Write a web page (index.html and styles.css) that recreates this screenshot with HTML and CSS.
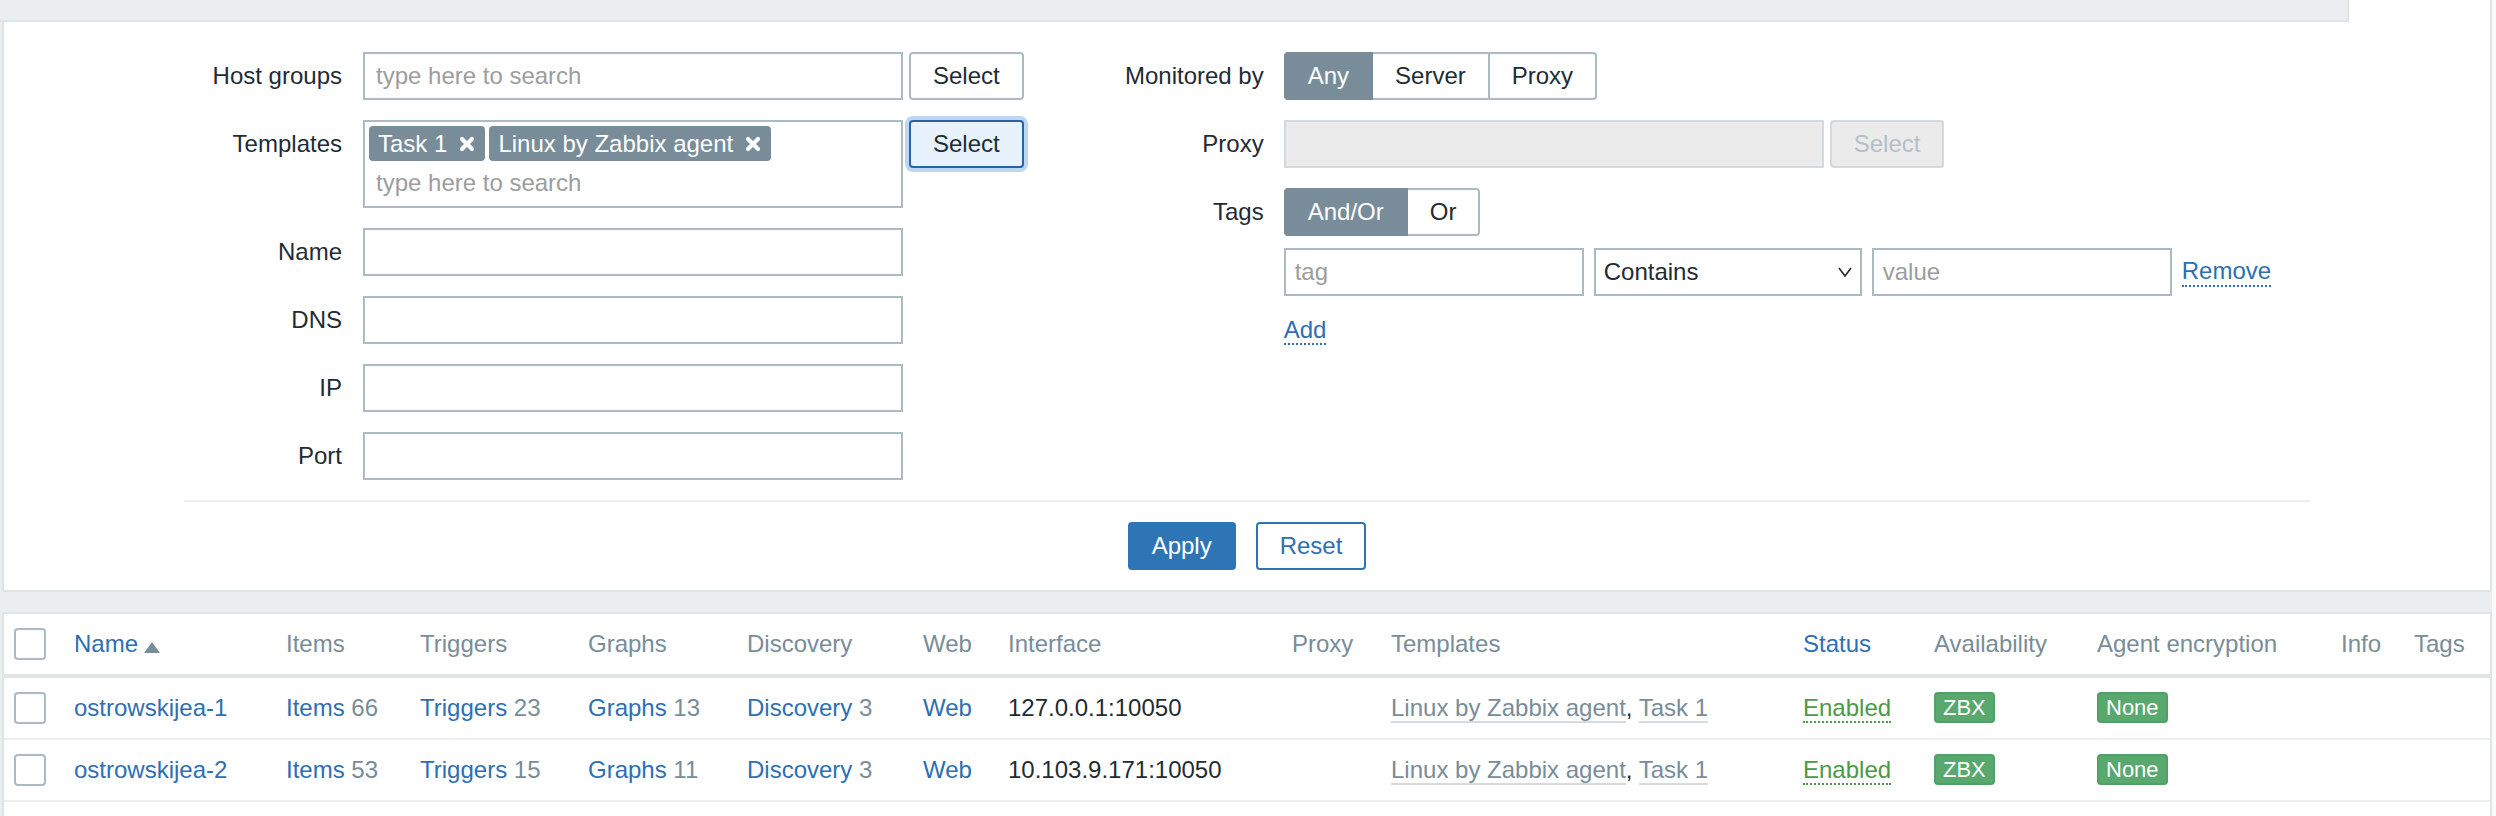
FILE: index.html
```html
<!DOCTYPE html>
<html>
<head>
<meta charset="utf-8">
<link rel="stylesheet" href="styles.css">
</head>
<body>
<div class="page">
  <div class="filter-tabs">
    <div class="tabs-strip"></div>
    <div class="tab-active"></div>
  </div>
  <div class="filter-body">
    <div class="filter-forms">
      <div class="form form-left">
        <label class="lbl">Host groups</label>
        <div class="field">
          <div class="input"><span class="ph">type here to search</span></div>
          <button class="btn-grey">Select</button>
        </div>

        <label class="lbl">Templates</label>
        <div class="field">
          <div class="multiselect">
            <ul class="chips">
              <li class="chip">Task 1<svg class="chip-x" viewBox="0 0 16 16" width="16" height="16"><path d="M3 3L13 13M13 3L3 13" stroke="#fff" stroke-width="4.2" stroke-linecap="round"/></svg></li>
              <li class="chip">Linux by Zabbix agent<svg class="chip-x" viewBox="0 0 16 16" width="16" height="16"><path d="M3 3L13 13M13 3L3 13" stroke="#fff" stroke-width="4.2" stroke-linecap="round"/></svg></li>
            </ul>
            <div class="ms-search"><span class="ph">type here to search</span></div>
          </div>
          <button class="btn-grey btn-focus">Select</button>
        </div>

        <label class="lbl">Name</label>
        <div class="field"><div class="input"></div></div>

        <label class="lbl">DNS</label>
        <div class="field"><div class="input"></div></div>

        <label class="lbl">IP</label>
        <div class="field"><div class="input"></div></div>

        <label class="lbl">Port</label>
        <div class="field"><div class="input"></div></div>
      </div>

      <div class="form form-right">
        <label class="lbl">Monitored by</label>
        <div class="field">
          <div class="radio">
            <span class="radio-item on">Any</span>
            <span class="radio-item">Server</span>
            <span class="radio-item">Proxy</span>
          </div>
        </div>

        <label class="lbl">Proxy</label>
        <div class="field">
          <div class="input disabled"></div>
          <button class="btn-grey btn-disabled">Select</button>
        </div>

        <label class="lbl">Tags</label>
        <div class="field field-col">
          <div class="radio">
            <span class="radio-item on">And/Or</span>
            <span class="radio-item">Or</span>
          </div>
          <div class="tag-row">
            <div class="input input-tag"><span class="ph">tag</span></div>
            <div class="select">Contains<svg class="chev" viewBox="0 0 14 10" width="14" height="10"><polyline points="1,1 7,9 13,1" fill="none" stroke="#1f2c33" stroke-width="1.6"/></svg></div>
            <div class="input input-tag"><span class="ph">value</span></div>
            <a class="link-dotted remove">Remove</a>
          </div>
          <div class="add-row"><a class="link-dotted">Add</a></div>
        </div>
      </div>
    </div>

    <div class="filter-buttons">
      <button class="btn-apply">Apply</button>
      <button class="btn-reset">Reset</button>
    </div>
  </div>

  <div class="list">
    <table class="hosts">
      <colgroup>
        <col class="c-cb"><col class="c-name"><col class="c-items"><col class="c-trig"><col class="c-graph"><col class="c-disc"><col class="c-web"><col class="c-iface"><col class="c-proxy"><col class="c-tpl"><col class="c-status"><col class="c-avail"><col class="c-enc"><col class="c-info"><col class="c-tags">
      </colgroup>
      <thead>
        <tr>
          <th><span class="cb"></span></th>
          <th><a class="link">Name</a><span class="arrow-up"></span></th>
          <th>Items</th>
          <th>Triggers</th>
          <th>Graphs</th>
          <th>Discovery</th>
          <th>Web</th>
          <th>Interface</th>
          <th>Proxy</th>
          <th>Templates</th>
          <th><a class="link">Status</a></th>
          <th>Availability</th>
          <th>Agent encryption</th>
          <th>Info</th>
          <th>Tags</th>
        </tr>
      </thead>
      <tbody>
        <tr>
          <td><span class="cb"></span></td>
          <td><a class="link">ostrowskijea-1</a></td>
          <td><a class="link">Items</a><span class="cnt"> 66</span></td>
          <td><a class="link">Triggers</a><span class="cnt"> 23</span></td>
          <td><a class="link">Graphs</a><span class="cnt"> 13</span></td>
          <td><a class="link">Discovery</a><span class="cnt"> 3</span></td>
          <td><a class="link">Web</a></td>
          <td>127.0.0.1:10050</td>
          <td></td>
          <td class="tpls"><a class="tpl">Linux by Zabbix agent</a>, <a class="tpl">Task 1</a></td>
          <td><a class="enabled">Enabled</a></td>
          <td><span class="badge">ZBX</span></td>
          <td><span class="badge">None</span></td>
          <td></td>
          <td></td>
        </tr>
        <tr>
          <td><span class="cb"></span></td>
          <td><a class="link">ostrowskijea-2</a></td>
          <td><a class="link">Items</a><span class="cnt"> 53</span></td>
          <td><a class="link">Triggers</a><span class="cnt"> 15</span></td>
          <td><a class="link">Graphs</a><span class="cnt"> 11</span></td>
          <td><a class="link">Discovery</a><span class="cnt"> 3</span></td>
          <td><a class="link">Web</a></td>
          <td>10.103.9.171:10050</td>
          <td></td>
          <td class="tpls"><a class="tpl">Linux by Zabbix agent</a>, <a class="tpl">Task 1</a></td>
          <td><a class="enabled">Enabled</a></td>
          <td><span class="badge">ZBX</span></td>
          <td><span class="badge">None</span></td>
          <td></td>
          <td></td>
        </tr>
        <tr class="row-empty">
          <td></td><td></td><td></td><td></td><td></td><td></td><td></td><td></td><td></td><td></td><td></td><td></td><td></td><td></td><td></td>
        </tr>
      </tbody>
    </table>
  </div>
</div>
</body>
</html>
```
FILE: styles.css
```css
* { box-sizing: border-box; }
html, body { margin: 0; padding: 0; background: #fafafa; }
body {
  font-family: "Liberation Sans", Arial, sans-serif;
  font-size: 24px;
  color: #1f2c33;
}
.page {
  width: 2492px;
  min-height: 816px;
  background: #ebeef0;
  padding-left: 2px;
}

/* top tab strip */
.filter-tabs { display: flex; height: 22px; margin-left: -2px; }
.tabs-strip { flex: 1; border-right: 2px solid #dfe4e7; border-bottom: 2px solid #dfe4e7; }
.tab-active { width: 143px; background: #fff; border-right: 2px solid #dfe4e7; }

/* filter panel */
.filter-body {
  background: #fff;
  border: 2px solid #dfe4e7;
  border-top: 0;
  padding: 30px 0 20px;
}
.filter-forms { display: flex; align-items: flex-start; }
.form { display: grid; row-gap: 20px; align-items: start; }
.form-left { grid-template-columns: 338px auto; column-gap: 21px; }
.form-right { grid-template-columns: 240px auto; column-gap: 20px; }
.lbl { text-align: right; line-height: 48px; white-space: nowrap; }
.field { display: flex; align-items: flex-start; gap: 6px; }
.field-col { flex-direction: column; gap: 0; }

.input {
  width: 540px;
  height: 48px;
  border: 2px solid #acbbc2;
  background: #fff;
  padding: 0 11px;
  line-height: 44px;
}
.input.disabled { background: #ebebeb; border-color: #d3d9dc; }
.ph { color: #9d9d9d; }

.multiselect {
  width: 540px;
  height: 88px;
  border: 2px solid #acbbc2;
  background: #fff;
  padding: 4px 4px 1px;
}
.chips { list-style: none; margin: 0; padding: 0; display: flex; gap: 4px; }
.chip {
  height: 35px;
  display: flex;
  align-items: center;
  background: #788d99;
  color: #fff;
  border-radius: 4px;
  padding: 0 10px 0 9px;
  gap: 12px;
  white-space: nowrap;
}
.chip-x { display: block; }
.ms-search { height: 44px; line-height: 44px; padding-left: 7px; }

.btn-grey {
  font: inherit;
  height: 48px;
  padding: 0 22px;
  border: 2px solid #acbbc2;
  border-radius: 4px;
  background: #fff;
  color: #1f2c33;
}
.btn-focus {
  background: #e8f2fc;
  border-color: #2a63a0;
  box-shadow: 0 0 0 4px #bdd7f3;
}
.btn-disabled {
  background: #ebebeb;
  border-color: #d3d9dc;
  color: #b3c0c7;
}

.radio { display: flex; height: 48px; }
.radio-item {
  height: 48px;
  line-height: 44px;
  padding: 0 22px;
  border: 2px solid #acbbc2;
  border-left: 0;
  background: #fff;
}
.radio-item:first-child { border-left: 2px solid #acbbc2; border-radius: 4px 0 0 4px; }
.radio-item:last-child { border-radius: 0 4px 4px 0; }
.radio-item.on { background: #788d99; border-color: #788d99; color: #fff; }

.tag-row { display: flex; align-items: center; gap: 10px; margin-top: 12px; }
.input-tag { width: 300px; padding-left: 9px; }
.select {
  width: 268px;
  height: 48px;
  border: 2px solid #acbbc2;
  background: #fff;
  padding: 0 0 0 8px;
  line-height: 44px;
  display: flex;
  align-items: center;
  justify-content: space-between;
}
.chev { margin-right: 8px; }
.link-dotted {
  color: #2d6fb2;
  border-bottom: 2px dotted #2d6fb2;
  text-decoration: none;
}
.add-row { margin-top: 10px; line-height: 48px; }

.filter-buttons {
  margin: 20px 180px 0;
  border-top: 2px solid #ebeef0;
  padding-top: 20px;
  display: flex;
  justify-content: center;
  gap: 20px;
}
.btn-apply, .btn-reset {
  font: inherit;
  height: 48px;
  padding: 0 22px;
  border-radius: 4px;
  border: 2px solid #2e75b6;
}
.btn-apply { background: #2e75b6; color: #fff; }
.btn-reset { background: #fff; color: #2d6fb2; }

/* list */
.list {
  margin-top: 20px;
  background: #fff;
  border: 2px solid #dfe4e7;
  border-bottom: 0;
}
.hosts { width: 100%; border-collapse: separate; border-spacing: 0; table-layout: fixed; }
.c-cb { width: 60px; }
.c-name { width: 212px; }
.c-items { width: 134px; }
.c-trig { width: 168px; }
.c-graph { width: 159px; }
.c-disc { width: 176px; }
.c-web { width: 85px; }
.c-iface { width: 284px; }
.c-proxy { width: 99px; }
.c-tpl { width: 412px; }
.c-status { width: 131px; }
.c-avail { width: 163px; }
.c-enc { width: 244px; }
.c-info { width: 73px; }
.hosts th {
  text-align: left;
  font-weight: normal;
  color: #788d99;
  padding: 0 10px;
  height: 64px;
  line-height: 32px;
  border-bottom: 4px solid #dfe4e7;
  white-space: nowrap;
  vertical-align: middle;
}
.hosts td {
  padding: 0 10px;
  height: 62px;
  line-height: 32px;
  border-bottom: 2px solid #ebeef0;
  white-space: nowrap;
  vertical-align: middle;
}
.cb {
  display: inline-block;
  width: 32px;
  height: 32px;
  border: 2px solid #acbbc2;
  border-radius: 4px;
  background: #fff;
  vertical-align: top;
}
.link { color: #2d6fb2; text-decoration: none; }
.arrow-up {
  display: inline-block;
  width: 0; height: 0;
  border-left: 8px solid transparent;
  border-right: 8px solid transparent;
  border-bottom: 11px solid #788d99;
  margin-left: 6px;
  vertical-align: -1px;
}
.cnt { color: #788d99; }
.tpls { color: #1f2c33; }
.tpl { color: #788d99; border-bottom: 2px solid #d5dbde; text-decoration: none; }
.enabled { color: #4b9a45; border-bottom: 2px dotted #4b9a45; text-decoration: none; }
.badge {
  display: inline-block;
  height: 31px;
  line-height: 27px;
  padding: 0 7px;
  font-size: 22px;
  color: #fff;
  background: #59a86d;
  border: 2px solid #52a065;
  border-radius: 4px;
  vertical-align: top;
}
```
